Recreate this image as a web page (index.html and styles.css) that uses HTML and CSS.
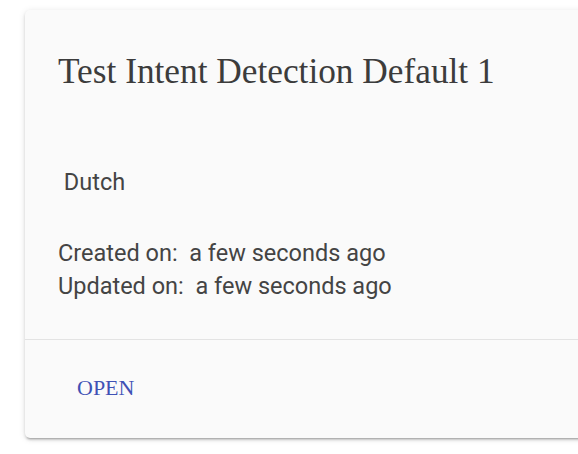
FILE: index.html
```html
<!DOCTYPE html>
<html>
<head>
<meta charset="utf-8">
<link rel="stylesheet" href="styles.css">
</head>
<body>
<div class="card">
  <div class="card-main">
    <h2 class="title">Test Intent Detection Default 1</h2>
    <p class="lang">&nbsp;Dutch</p>
    <div class="meta">
      <div>Created on:&nbsp; a few seconds ago</div>
      <div>Updated on:&nbsp; a few seconds ago</div>
    </div>
  </div>
  <div class="card-actions">
    <button class="btn">OPEN</button>
  </div>
</div>
</body>
</html>
```
FILE: styles.css
```css
html, body {
  margin: 0;
  padding: 0;
  background: #ffffff;
  overflow: hidden;
}
body {
  width: 578px;
  height: 454px;
}
.card {
  margin: 10px 0 0 25px;
  width: 620px;
  background: #fafafa;
  border-radius: 5px;
  box-shadow: 0 3px 2px -2px rgba(0,0,0,0.22), 0 2px 3px 0 rgba(0,0,0,0.14), 0 1px 7px 0 rgba(0,0,0,0.10);
}
.card-main {
  padding: 42px 33px 36px 33px;
  border-bottom: 1px solid #e3e3e3;
}
.title {
  margin: 0;
  font-family: "Liberation Serif", "Times New Roman", serif;
  font-weight: normal;
  font-size: 35.3px;
  line-height: 40px;
  color: #3c3c3c;
}
.lang {
  margin: 74px 0 0 0;
  font-family: Roboto, "Liberation Sans", sans-serif;
  font-size: 23.5px;
  line-height: 33px;
  color: #444444;
}
.meta {
  margin-top: 38px;
  font-family: Roboto, "Liberation Sans", sans-serif;
  font-size: 23.5px;
  line-height: 33px;
  color: #444444;
}
.card-actions {
  padding: 30px 0 32px 52px;
}
.btn {
  border: none;
  background: none;
  padding: 0;
  font-family: "Liberation Serif", "Times New Roman", serif;
  font-size: 22px;
  line-height: 36px;
  color: #3f51b5;
  display: block;
}
```
